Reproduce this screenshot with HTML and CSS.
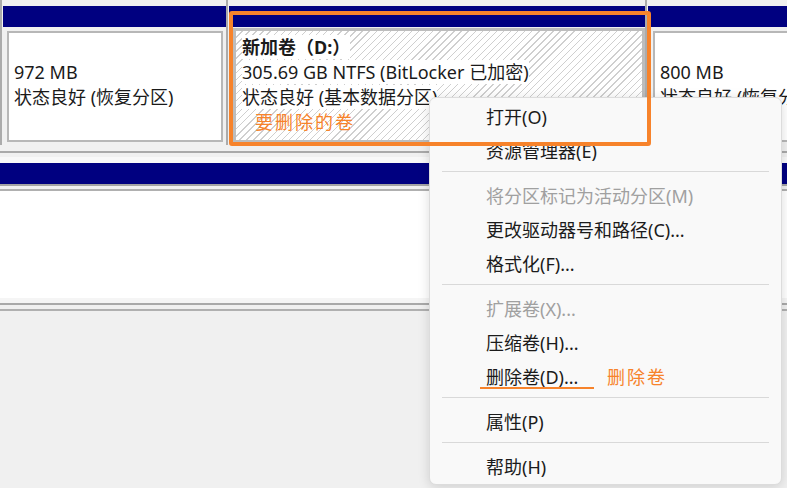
FILE: index.html
```html
<!DOCTYPE html>
<html lang="zh-CN">
<head>
<meta charset="utf-8">
<title>磁盘管理</title>
<link rel="stylesheet" href="styles.css">
</head>
<body>
<div class="screen">
  <div class="disk">
    <div class="vline"></div>
    <div class="part p1">
      <div class="bar"></div>
      <div class="box plain">
        <div class="ln"></div>
        <div class="ln">972 MB</div>
        <div class="ln">状态良好 (恢复分区)</div>
      </div>
    </div>
    <div class="vline"></div>
    <div class="part p2">
      <div class="bar"></div>
      <div class="box hatch">
        <div class="ln"><span class="t bold">新加卷（D:）</span></div>
        <div class="ln"><span class="t">305.69 GB NTFS (BitLocker 已加密)</span></div>
        <div class="ln"><span class="t">状态良好 (基本数据分区)</span></div>
        <div class="ln note">要删除的卷</div>
      </div>
    </div>
    <div class="vline"></div>
    <div class="part p3">
      <div class="bar"></div>
      <div class="box plain">
        <div class="ln"></div>
        <div class="ln">800 MB</div>
        <div class="ln">状态良好 (恢复分区)</div>
      </div>
    </div>
  </div>

  <div class="disk2">
    <div class="d2-top"></div>
    <div class="bar2"></div>
    <div class="d2-gap"></div>
    <div class="d2-body"></div>
    <div class="d2-foot"></div>
  </div>

  <div class="menu">
    <div class="item">打开(O)</div>
    <div class="item">资源管理器(E)</div>
    <div class="sep"></div>
    <div class="item dis">将分区标记为活动分区(M)</div>
    <div class="item">更改驱动器号和路径(C)...</div>
    <div class="item">格式化(F)...</div>
    <div class="sep"></div>
    <div class="item dis">扩展卷(X)...</div>
    <div class="item">压缩卷(H)...</div>
    <div class="item del">删除卷(D)...<span class="uline"></span><span class="del-note">删除卷</span></div>
    <div class="sep"></div>
    <div class="item">属性(P)</div>
    <div class="sep"></div>
    <div class="item">帮助(H)</div>
  </div>

  <div class="annot-box"></div>
</div>
</body>
</html>
```

FILE: styles.css
```css
* { box-sizing: border-box; }
html, body { margin: 0; padding: 0; }
body {
  background: #f0f0f0;
  font-family: "Noto Sans", "Noto Sans CJK SC", sans-serif;
  font-size: 18px;
  color: #1a1a1a;
}
.screen {
  position: relative;
  width: 787px;
  height: 488px;
  overflow: hidden;
  background: #f0f0f0;
}

/* disk row 1 */
.disk {
  display: flex;
  height: 151px;
}
.vline {
  width: 2px;
  height: 145px;
  margin-right: 1px;
  background: #ababab;
  flex: none;
}
.part {
  display: flex;
  flex-direction: column;
  padding-top: 6px;
  flex: none;
}
.p1 { width: 223px; }
.p2 { width: 416px; }
.p3 { flex: 1; }
.bar {
  height: 21px;
  background: #000080;
}
.box {
  overflow: hidden;
  white-space: nowrap;
}
.box.plain {
  margin-top: 4px;
  height: 111px;
  background: #fff;
  border: 2px solid #b7b7b7;
  padding: 2px 0 0 5px;
}
.p1 .box { margin-left: 4px; margin-right: 3px; }
.p3 .box { margin-left: 5px; border-right: none; }
.box.hatch {
  margin-top: 1px;
  margin-left: 4px;
  height: 115px;
  border: 3px solid #bdbdbd;
  padding: 4px 0 0 6px;
  background: repeating-linear-gradient(135deg, #ffffff 0 4px, #cfcfcf 4px 5px);
}
.ln {
  height: 25px;
  line-height: 25px;
}
.t { background: #fff; }
.bold { font-weight: 700; }
.note {
  color: #f7832b;
  padding-left: 13px;
  letter-spacing: 2px;
}

/* disk row 2 */
.disk2 {
  border-top: 2px solid #a9a9a9;
  padding-top: 4px;
}
.d2-top {
  height: 6px;
  background: #f8f8f8;
}
.bar2 {
  height: 21px;
  background: #000080;
  border-bottom: 2px solid #a4a4a4;
  box-sizing: content-box;
}
.d2-gap {
  height: 3px;
}
.d2-body {
  height: 114px;
  background: #fff;
  border-top: 2px solid #b0b0b0;
  border-bottom: 5px solid #f5f5f5;
}
.d2-foot {
  height: 8px;
  border-top: 2px solid #a9a9a9;
  border-bottom: 2px solid #b0b0b0;
}

/* orange annotation frame (drawn over the menu, as in the reference) */
.annot-box {
  position: absolute;
  left: 229px;
  top: 11px;
  width: 422px;
  height: 135px;
  border: 4px solid #f7832b;
  border-radius: 3px;
}

/* context menu */
.menu {
  position: absolute;
  left: 429px;
  top: 97px;
  width: 353px;
  height: 388px;
  background: #f9f9f9;
  border: 1px solid #dcdcdc;
  border-radius: 7px;
  padding-top: 2px;
  box-shadow: 0 2px 12px rgba(0, 0, 0, 0.14);
}
.item {
  position: relative;
  height: 34px;
  line-height: 34px;
  padding-left: 56px;
  color: #1b1b1b;
  white-space: nowrap;
}
.item.dis { color: #a0a0a0; }
.sep {
  height: 1px;
  margin: 3px 12px 7px;
  background: #d9d9d9;
}
.uline {
  position: absolute;
  left: 50px;
  top: 27px;
  width: 114px;
  height: 2px;
  background: #f7832b;
}
.del-note {
  position: absolute;
  left: 177px;
  top: 0;
  color: #f7832b;
  letter-spacing: 2px;
}
```
